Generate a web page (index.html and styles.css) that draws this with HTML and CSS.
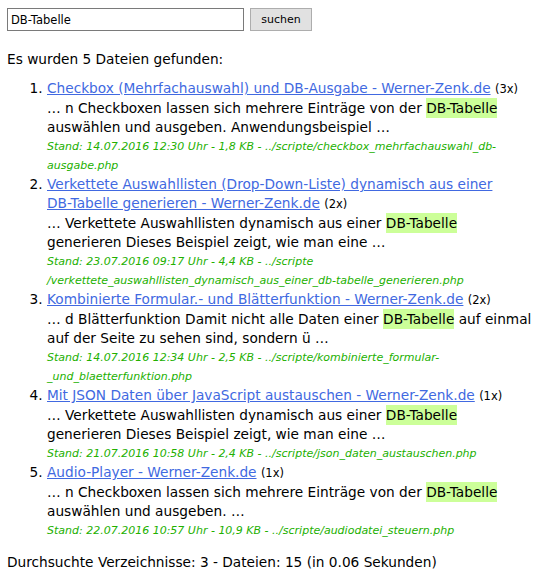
FILE: index.html
```html
<!DOCTYPE html>
<html lang="de">
<head>
<meta charset="utf-8">
<title>Suche</title>
<link rel="stylesheet" href="styles.css">
</head>
<body>
<form class="search">
  <input class="search-input" type="text" value="DB-Tabelle">
  <button class="search-btn" type="button">suchen</button>
</form>
<p class="summary">Es wurden 5 Dateien gefunden:</p>
<ol class="results">
  <li>
    <div class="head"><a class="title" href="#">Checkbox (Mehrfachauswahl) und DB-Ausgabe - Werner-Zenk.de</a> <span class="count">(3x)</span></div>
    <div class="excerpt">… n Checkboxen lassen sich mehrere Einträge von der <span class="hl">DB-Tabelle</span><br>auswählen und ausgeben. Anwendungsbeispiel …</div>
    <div class="meta">Stand: 14.07.2016 12:30 Uhr - 1,8 KB - ../scripte/checkbox_mehrfachauswahl_db-<br>ausgabe.php</div>
  </li>
  <li>
    <div class="head"><a class="title" href="#">Verkettete Auswahllisten (Drop-Down-Liste) dynamisch aus einer<br>DB-Tabelle generieren - Werner-Zenk.de</a> <span class="count">(2x)</span></div>
    <div class="excerpt">… Verkettete Auswahllisten dynamisch aus einer <span class="hl">DB-Tabelle</span><br>generieren Dieses Beispiel zeigt, wie man eine …</div>
    <div class="meta">Stand: 23.07.2016 09:17 Uhr - 4,4 KB - ../scripte<br>/verkettete_auswahllisten_dynamisch_aus_einer_db-tabelle_generieren.php</div>
  </li>
  <li>
    <div class="head"><a class="title" href="#">Kombinierte Formular.- und Blätterfunktion - Werner-Zenk.de</a> <span class="count">(2x)</span></div>
    <div class="excerpt">… d Blätterfunktion Damit nicht alle Daten einer <span class="hl">DB-Tabelle</span> auf einmal<br>auf der Seite zu sehen sind, sondern ü …</div>
    <div class="meta">Stand: 14.07.2016 12:34 Uhr - 2,5 KB - ../scripte/kombinierte_formular-<br>_und_blaetterfunktion.php</div>
  </li>
  <li>
    <div class="head"><a class="title" href="#">Mit JSON Daten über JavaScript austauschen - Werner-Zenk.de</a> <span class="count">(1x)</span></div>
    <div class="excerpt">… Verkettete Auswahllisten dynamisch aus einer <span class="hl">DB-Tabelle</span><br>generieren Dieses Beispiel zeigt, wie man eine …</div>
    <div class="meta">Stand: 21.07.2016 10:58 Uhr - 2,4 KB - ../scripte/json_daten_austauschen.php</div>
  </li>
  <li>
    <div class="head"><a class="title" href="#">Audio-Player - Werner-Zenk.de</a> <span class="count">(1x)</span></div>
    <div class="excerpt">… n Checkboxen lassen sich mehrere Einträge von der <span class="hl">DB-Tabelle</span><br>auswählen und ausgeben. …</div>
    <div class="meta">Stand: 22.07.2016 10:57 Uhr - 10,9 KB - ../scripte/audiodatei_steuern.php</div>
  </li>
</ol>
<p class="footer">Durchsuchte Verzeichnisse: 3 - Dateien: 15 (in 0.06 Sekunden)</p>
</body>
</html>
```

FILE: styles.css
```css
html, body {
  background: #ffffff;
}
body {
  margin: 8px 7px;
  font-family: "DejaVu Sans", Verdana, sans-serif;
  font-size: 13.7px;
  line-height: 19px;
  color: #000000;
}
.search {
  display: flex;
  align-items: center;
  gap: 6px;
  margin: 0;
}
.search-input {
  box-sizing: border-box;
  width: 237px;
  height: 23px;
  margin: 0;
  padding: 0 3px;
  border: 1px solid #7a7a7a;
  font-family: "DejaVu Sans", Verdana, sans-serif;
  font-size: 11.5px;
  color: #000;
  background: #fff;
  outline: none;
}
.search-btn {
  box-sizing: border-box;
  width: 62px;
  height: 23px;
  margin: 0;
  padding: 0;
  border: 1px solid #adadad;
  background: #e1e1e1;
  font-family: "DejaVu Sans", Verdana, sans-serif;
  font-size: 11px;
  color: #000;
}
.summary {
  margin: 19px 0 10px;
}
.results {
  margin: 0;
  padding-left: 40px;
}
.head,
.excerpt,
.meta {
  white-space: nowrap;
}
.title {
  color: #4169e1;
  text-decoration: underline;
}
.count {
  font-size: 11.5px;
}
.hl {
  background: #ccff99;
  padding: 2px 0;
}
.meta {
  font-size: 11px;
  font-style: italic;
  color: #22b000;
  line-height: 19px;
}
.footer {
  margin: 13px 0 0;
}
```
